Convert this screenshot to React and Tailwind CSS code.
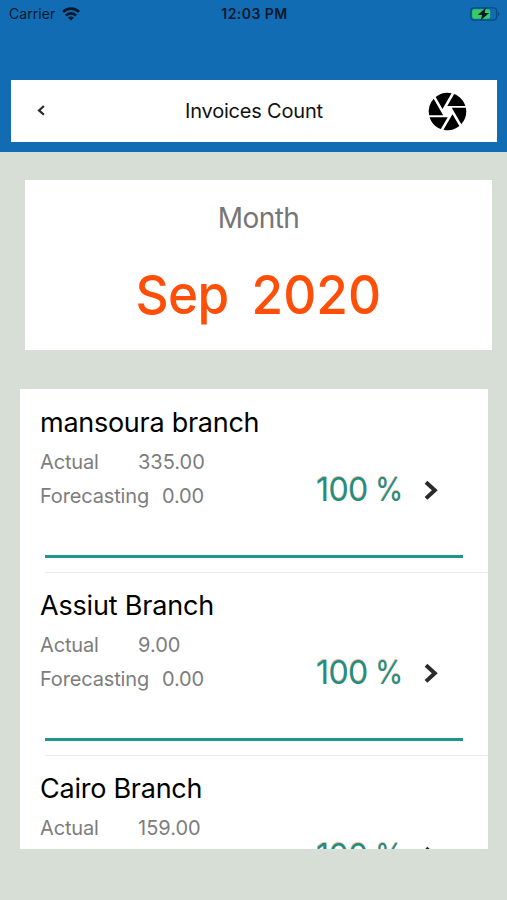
import { MdCamera } from "react-icons/md";

const branches = [
  { name: "mansoura branch", nameClass: "tracking-[-0.27px]", actual: "335.00", forecasting: "0.00", percent: 100 },
  { name: "Assiut Branch", nameClass: "tracking-[-0.18px]", actual: "9.00", forecasting: "0.00", percent: 100 },
  { name: "Cairo Branch", nameClass: "tracking-[-0.25px]", actual: "159.00", forecasting: "0.00", percent: 100 },
];

function WifiIcon() {
  return (
    <svg width="18" height="14" viewBox="0 0 18 14" fill="none" stroke="#06182b" strokeWidth="2.7">
      <path d="M1 4.9 A11.3 11.3 0 0 1 17 4.9" />
      <path d="M3.9 8.5 A7.1 7.1 0 0 1 14.1 8.5" />
      <path d="M9 13.6 L6 10.8 A4 4 0 0 1 12 10.8 Z" fill="#06182b" stroke="none" />
    </svg>
  );
}

function BatteryIcon() {
  return (
    <svg width="30" height="14" viewBox="0 0 30 14" fill="none">
      <rect x="0.8" y="0.8" width="25.8" height="12.4" rx="3.4" stroke="#0a4a80" strokeWidth="1.3" />
      <path d="M28 4.8 C29.8 5.4 29.8 8.6 28 9.2 Z" fill="#0a4a80" />
      <rect x="2.2" y="2.2" width="18" height="9.6" rx="2" fill="#35cf5f" />
      <path d="M15.8 0.8 L7.6 8 H12.2 L10.6 13.2 L19.2 6 H14.6 Z" fill="#06182b" />
    </svg>
  );
}

function StatusBar() {
  return (
    <div className="grid h-[27px] grid-cols-3 items-center pl-[9px] pr-[7px] text-[#06182b]">
      <div className="flex items-center gap-[7px]">
        <span className="text-[14px] tracking-[0.05px]">Carrier</span>
        <WifiIcon />
      </div>
      <span className="text-center text-[14px] font-semibold tracking-[0.45px]">12:03 PM</span>
      <div className="flex justify-end">
        <BatteryIcon />
      </div>
    </div>
  );
}

function BranchRow({ branch }) {
  return (
    <div className="h-[183px] shrink-0 pt-[17px]">
      <h2 className={`pl-5 text-[27px] leading-[34px] text-black ${branch.nameClass}`}>
        {branch.name}
      </h2>

      <div className="flex h-[90px] pl-5">
        <div className="w-[275px] pt-[5px] text-[20px] leading-[34px] text-[#7d7d7d]">
          <div className="flex">
            <span className="w-[98px] tracking-[-0.15px]">Actual</span>
            <span>{branch.actual}</span>
          </div>
          <div className="flex">
            <span className="w-[122px] tracking-[-0.15px]">Forecasting</span>
            <span className="tracking-[-0.2px]">{branch.forecasting}</span>
          </div>
        </div>

        <div className="flex h-[99px] items-center">
          <div className="flex w-[91px] gap-[7px] pl-px text-[32px] text-[#1e8f82] [text-shadow:0_-0.6px_0_rgba(240,110,40,0.5)]">
            <span className="tracking-[-0.6px]">{branch.percent}</span>
            <span className="origin-left scale-x-90">%</span>
          </div>
          <svg width="50" height="22" viewBox="0 0 50 22" fill="none" stroke="#2a2a2a" strokeWidth="4">
            <path d="M20 3.2 L28.8 11.3 L20 19.4" />
          </svg>
        </div>
      </div>

      {/* progress */}
      <div className="ml-[25px] mt-[25px] h-[3px] w-[418px] bg-[#20958a]" />
      <div className="ml-[25px] mt-[14px] h-px bg-[#ebebeb]" />
    </div>
  );
}

export default function App() {
  return (
    <div className="flex h-[900px] w-[507px] flex-col overflow-hidden bg-[#d6ded6] font-['Inter','Liberation_Sans',sans-serif]">
      <header className="h-[152px] bg-[#116cb4]">
        <StatusBar />
        <div className="ml-[11px] mt-[53px] flex h-[62px] w-[486px] items-center bg-white">
          <svg className="ml-[25px]" width="10" height="12" viewBox="0 0 10 12" fill="none" stroke="#2a2a2a" strokeWidth="2.2">
            <path d="M7.9 1 L3 5.4 L7.9 9.8" />
          </svg>
          <h1 className="ml-[139px] w-[240px] text-[20px] tracking-[-0.2px] text-[#111]">Invoices Count</h1>
          <MdCamera size={45} color="#000" />
        </div>
      </header>

      <main>
        <section className="ml-[25px] mt-[28px] flex h-[170px] w-[467px] flex-col items-center bg-white">
          <span className="mt-[20px] text-[28px] leading-[36px] tracking-[-0.6px] text-[#767676]">Month</span>
          <div className="mt-[26px] flex scale-x-95 gap-[24px] text-[54px] font-[450] leading-[66px] text-[#ff4e08]">
            <span className="tracking-[-0.6px]">Sep</span>
            <span>2020</span>
          </div>
        </section>

        <section className="ml-[20px] mt-[39px] flex h-[460px] w-[468px] flex-col overflow-hidden bg-white">
          {branches.map((branch) => (
            <BranchRow key={branch.name} branch={branch} />
          ))}
        </section>
      </main>
    </div>
  );
}
